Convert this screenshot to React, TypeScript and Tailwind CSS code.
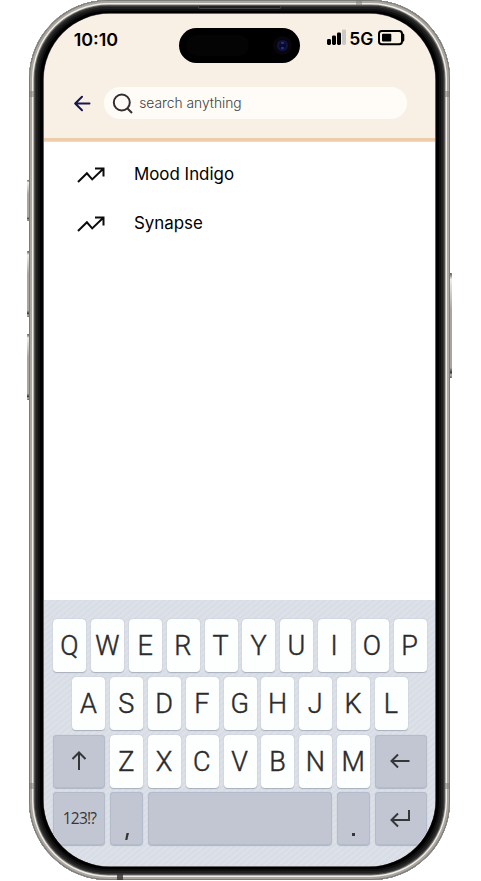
import React from "react";

const LETTER_KEY =
  "flex h-[53px] w-[33px] shrink-0 items-center justify-center rounded-[4px] bg-[#fdfefe] text-[27px] font-light leading-none text-[#2b2b2b] [-webkit-text-stroke:0.45px_#2b2b2b] shadow-[0_0.5px_1px_#a9afbc,0_0_1px_#c2c7d2]";
const ACTION_KEY =
  "flex h-[53px] shrink-0 items-center justify-center rounded-[4px] bg-[#c2c6d2] text-[#353638] shadow-[inset_0_0_0_1px_#b4bccb,0_0.5px_1px_#aeb6c4]";

function Letters({ row }: { row: string }) {
  return (
    <>
      {row.split("").map((c) => (
        <div key={c} className={LETTER_KEY}>
          <span className="relative top-[1.5px] -left-[0.5px]">{c}</span>
        </div>
      ))}
    </>
  );
}

function Arrow({ d }: { d: string }) {
  return (
    <svg width="22" height="22" viewBox="0 0 22 22" fill="none" stroke="currentColor" strokeWidth="2">
      <path d={d} />
    </svg>
  );
}

function Keyboard() {
  return (
    <div className="flex h-[266.5px] flex-col gap-[5px] bg-[#dadfe7] bg-[repeating-linear-gradient(140deg,#d7dce5_0px,#d9dde6_1.5px,#dee2e9_3px,#d9dee6_4.5px)] pl-[9.8px] pt-[19px] font-['Roboto',sans-serif]">
      <div className="flex gap-[4.8px]">
        <Letters row="QWERTYUIOP" />
      </div>
      <div className="flex gap-[4.8px] pl-[19px]">
        <Letters row="ASDFGHJKL" />
      </div>
      <div className="flex gap-[4.8px]">
        <div className={`${ACTION_KEY} w-[52px]`}>
          <Arrow d="M11 20V2.5M4.5 9L11 2.5L17.5 9" />
        </div>
        <Letters row="ZXCVBNM" />
        <div className={`${ACTION_KEY} w-[52.5px]`}>
          <Arrow d="M19.5 11H2M8 4.5L1.5 11L8 17.5" />
        </div>
      </div>
      <div className="-mt-[0.5px] flex gap-[4.8px]">
        <div className={`${ACTION_KEY} w-[52px] font-['Open_Sans',sans-serif] text-[15.5px] tracking-[-0.8px]`}>123!?</div>
        <div className={`${ACTION_KEY} w-[33px]`}>
          <svg width="6" height="10" viewBox="0 0 6 10" className="mt-[36px]">
            <path d="M2.5 1H5L3.3 8H1.2Z" fill="currentColor" />
          </svg>
        </div>
        <div className={`${ACTION_KEY} w-[184.2px]`} />
        <div className={`${ACTION_KEY} w-[33px]`}>
          <div className="mt-[31px] h-[3px] w-[2.5px] bg-[#353638]" />
        </div>
        <div className={`${ACTION_KEY} w-[52.5px]`}>
          <Arrow d="M19 2V12H2M8 5.5L1.5 12L8 18.5" />
        </div>
      </div>
    </div>
  );
}

function StatusBar() {
  return (
    <div className="flex h-[50px] items-center justify-between pl-[30px] pr-[30px]">
      <span className="mt-[2px] text-[17.9px] font-semibold leading-none text-black">10:10</span>
      <div className="flex items-center">
        <svg width="19" height="17" viewBox="0 0 19 17" className="-mt-[3px] mr-[3px]">
          <rect x="0" y="10" width="4" height="6" rx="1.4" />
          <rect x="5" y="6.5" width="4" height="9.5" rx="1.4" />
          <rect x="10" y="3.5" width="4" height="12.5" rx="1.4" />
          <rect x="15" y="0.5" width="4" height="15.5" rx="1.4" fill="#c9c8c7" />
        </svg>
        <span className="mr-[5px] text-[17.5px] font-semibold leading-none text-black">5G</span>
        <svg width="27" height="17" viewBox="0 0 27 17" className="-mt-[3px]">
          <rect x="1" y="2" width="23" height="13.2" rx="2.8" fill="none" stroke="#000" strokeWidth="2" />
          <rect x="4" y="4.8" width="9.3" height="7.8" rx="1" />
          <path d="M24 4.5H25Q26.3 4.8 26.3 6V11Q26.3 12.5 25 12.8H24Z" />
        </svg>
      </div>
    </div>
  );
}

function Trend({ label }: { label: string }) {
  return (
    <div className="flex h-[49px] items-center pl-[33px]">
      <svg width="30" height="18" viewBox="0 0 30 18" fill="none" stroke="#0b0b0b" strokeWidth="2" className="mr-[27.3px] mt-[3px]">
        <path d="M1 16L9.9 7.3L15.2 13.4L26 3M18 2.4H26.5V10.5" />
      </svg>
      <span className="mt-[2px] text-[16.9px] leading-none text-black">{label}</span>
    </div>
  );
}

const SIDE_BUTTON =
  "absolute w-[3px] rounded-[1px] bg-[linear-gradient(#55524f_0,#f0eee8_6%,#aaa5a0_35%,#aaa5a0_90%,#393735_95%,#bbb_97%,#555_100%)]";

export default function App() {
  return (
    <div className="relative h-[881px] w-[481px] overflow-hidden bg-white font-['Inter',sans-serif]">
      <div className={`${SIDE_BUTTON} left-[27px] top-[180px] h-[41px]`} />
      <div className={`${SIDE_BUTTON} left-[27px] top-[251px] h-[66px]`} />
      <div className={`${SIDE_BUTTON} left-[27px] top-[334px] h-[66px]`} />
      <div className={`${SIDE_BUTTON} left-[449px] top-[273px] h-[105px]`} />

      <div className="relative ml-[29px] h-[880px] w-[421px] rounded-[79px] bg-black px-[14.7px] pt-[14px] shadow-[inset_0_0_0_1px_#7d7b78,inset_0_0_0_3px_#aaa7a2,inset_0_0_0_4.5px_#efede5,inset_0_0_0_5.5px_#777570,inset_0_0_0_7px_#343434,inset_0_0_0_9px_#202020,inset_0_0_0_11px_#101010]">
        <div className="h-[852px] overflow-hidden rounded-[66px] bg-white shadow-[0_0_0_0.7px_#8b8986]">
          <div className="h-[124px] bg-[#f9f0e5]">
            <StatusBar />
            <div className="flex items-center pl-[30px] pt-[23.4px]">
              <svg width="17" height="17" viewBox="0 0 17 17" fill="none" stroke="#1a1750" strokeWidth="2" strokeLinecap="round" strokeLinejoin="round">
                <path d="M15.5 8.5H1.5M8 1.7L1.2 8.5L8 15.3" />
              </svg>
              <div className="ml-[13.5px] flex h-[32px] w-[303px] items-center rounded-full bg-[#fffbf6] pl-[8px]">
                <svg width="21" height="21" viewBox="0 0 21 21" fill="none" stroke="#303030" strokeWidth="2">
                  <circle cx="9.8" cy="9.5" r="8" />
                  <path d="M15.5 15.5L20 20" />
                </svg>
                <span className="ml-[6px] mt-[2px] text-[13.8px] font-light leading-none text-[#414141]">search anything</span>
              </div>
            </div>
          </div>
          <div className="h-[3.5px] bg-[linear-gradient(#edcbab_60%,#f8e0c8)]" />
          <div className="h-[458px] bg-white pt-[7.5px]">
            <Trend label="Mood Indigo" />
            <Trend label="Synapse" />
          </div>
          <Keyboard />
        </div>

        <div className="absolute left-[150px] top-[28px] flex h-[35px] w-[121px] items-center justify-between rounded-full bg-black pl-[7px] pr-[8px]">
          <div className="h-[21px] w-[63px] rounded-full bg-[#040405]" />
          <div className="flex h-[19px] w-[19px] items-center justify-center rounded-full bg-[#08050d]">
            <div className="flex h-[11px] w-[11px] items-center justify-center rounded-full bg-[#12143c]">
              <div className="flex h-[7px] w-[7px] flex-col items-center justify-between rounded-full bg-[#090a30]">
                <div className="h-[2px] w-[3px] rounded-full bg-[#293197]" />
                <div className="h-[2px] w-[3px] rounded-full bg-[#293197]" />
              </div>
            </div>
          </div>
        </div>
        <div className="absolute left-[169px] top-[5.5px] h-[3px] w-[83px] rounded-b-[2px] border border-t-0 border-[#424442] bg-[#20221f]" />
        <div className="absolute left-0 top-[91px] h-[6px] w-[5px] bg-[#777571]/50" />
        <div className="absolute right-0 top-[91px] h-[6px] w-[5px] bg-[#777571]/50" />
        <div className="absolute left-0 top-[783px] h-[6px] w-[5px] bg-[#777571]/50" />
        <div className="absolute right-0 top-[783px] h-[6px] w-[5px] bg-[#777571]/50" />
        <div className="absolute left-[327px] top-0 h-[5px] w-[6px] bg-[#777571]/50" />
        <div className="absolute bottom-0 left-[88px] h-[6px] w-[6px] bg-[#33312e]/80" />
      </div>
    </div>
  );
}
